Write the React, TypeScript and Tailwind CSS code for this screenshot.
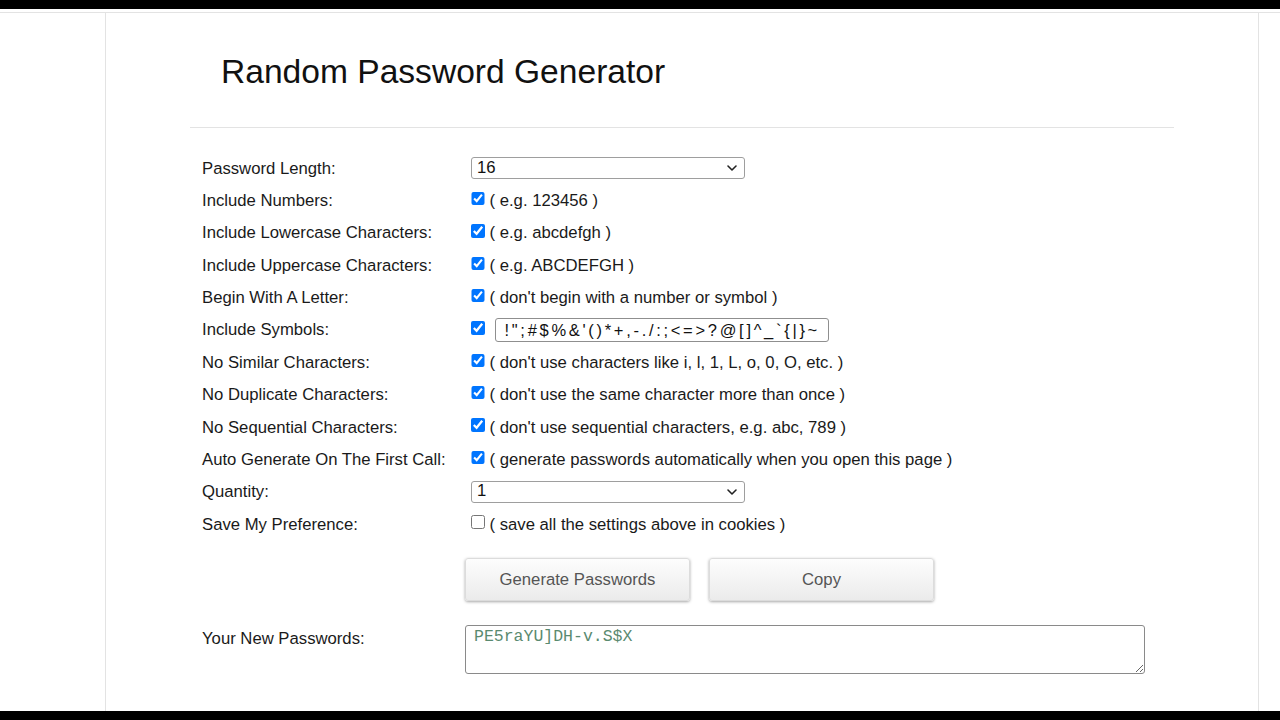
import React, { useState } from 'react';

// Random password generator settings page

const SYMBOLS = '!";#$%&\'()*+,-./:;<=>?@[]^_`{|}~';

interface OptionRow {
  label: string;
  hint: string;
  checked: boolean;
}

const OPTIONS: OptionRow[] = [
  { label: 'Include Numbers:', hint: '( e.g. 123456 )', checked: true },
  { label: 'Include Lowercase Characters:', hint: '( e.g. abcdefgh )', checked: true },
  { label: 'Include Uppercase Characters:', hint: '( e.g. ABCDEFGH )', checked: true },
  { label: 'Begin With A Letter:', hint: "( don't begin with a number or symbol )", checked: true },
];

const OPTIONS_AFTER: OptionRow[] = [
  { label: 'No Similar Characters:', hint: "( don't use characters like i, l, 1, L, o, 0, O, etc. )", checked: true },
  { label: 'No Duplicate Characters:', hint: "( don't use the same character more than once )", checked: true },
  { label: 'No Sequential Characters:', hint: "( don't use sequential characters, e.g. abc, 789 )", checked: true },
  { label: 'Auto Generate On The First Call:', hint: '( generate passwords automatically when you open this page )', checked: true },
];

const Chevron = () => (
  <svg width="12" height="8" viewBox="0 0 12 8" className="shrink-0">
    <polyline points="2,2 6,6 10,2" fill="none" stroke="#222" strokeWidth="1.6" strokeLinecap="round" strokeLinejoin="round" />
  </svg>
);

const FakeSelect: React.FC<{ value: string }> = ({ value }) => (
  <div className="ml-[6px] flex h-[22px] w-[274px] items-center justify-between rounded-[3px] border border-[#9e9e9e] bg-white pl-[5px] pr-[6px] text-[16.7px] leading-none text-[#111]">
    <span>{value}</span>
    <Chevron />
  </div>
);

const Checkbox: React.FC<{ checked: boolean }> = ({ checked }) => {
  const [on, setOn] = useState(checked);
  return (
    <input
      type="checkbox"
      checked={on}
      onChange={() => setOn(!on)}
      className="relative top-[-2px] m-0 h-[13.5px] w-[13.5px] shrink-0 accent-[#0075ff]"
    />
  );
};

const Row: React.FC<{ label: string; children: React.ReactNode }> = ({ label, children }) => (
  <div className="flex h-[32.36px] items-center">
    <div className="w-[263px] shrink-0">{label}</div>
    <div className="flex items-center">{children}</div>
  </div>
);

const CheckRow: React.FC<{ row: OptionRow }> = ({ row }) => (
  <Row label={row.label}>
    <div className="ml-[6px] flex items-center gap-[5px]">
      <Checkbox checked={row.checked} />
      <span>{row.hint}</span>
    </div>
  </Row>
);

const ActionButton: React.FC<{ children: React.ReactNode }> = ({ children }) => (
  <button className="h-[43px] w-[225px] rounded-[3px] border border-[#dcdcdc] bg-gradient-to-b from-[#fdfdfd] to-[#ebebeb] text-[16.7px] text-[#555] shadow-[0_1px_3px_rgba(0,0,0,0.35)]">
    {children}
  </button>
);

export default function App() {
  return (
    <div className="flex h-[720px] flex-col bg-white font-['Liberation_Sans',Arial,sans-serif] text-[16.7px] text-[#1a1a1a]">
      <div className="h-[9px] shrink-0 bg-black" />
      <div className="mt-[3px] flex flex-1 flex-col border-t border-[#e3e3e3]">
        <div className="ml-[105px] mr-[21px] flex-1 border-x border-[#e3e3e3] px-[84px]">
          {/* Header */}
          <h1 className="ml-[31px] mt-[39px] text-[33.6px] leading-[40px] text-[#111]">Random Password Generator</h1>
          <div className="mt-[35px] h-px bg-[#e3e3e3]" />

          {/* Settings */}
          <div className="pl-[12px] pt-[24px]">
            <Row label="Password Length:">
              <FakeSelect value="16" />
            </Row>
            {OPTIONS.map((row) => (
              <CheckRow key={row.label} row={row} />
            ))}
            <Row label="Include Symbols:">
              <div className="ml-[6px] flex items-center gap-[10px]">
                <Checkbox checked />
                <input
                  readOnly
                  value={SYMBOLS}
                  className="h-[24px] w-[334px] rounded-[3px] border border-[#8f8f8f] bg-white pl-[9px] text-[16.5px] tracking-[2.7px] text-[#111] outline-none"
                />
              </div>
            </Row>
            {OPTIONS_AFTER.map((row) => (
              <CheckRow key={row.label} row={row} />
            ))}
            <Row label="Quantity:">
              <FakeSelect value="1" />
            </Row>
            <CheckRow row={{ label: 'Save My Preference:', hint: '( save all the settings above in cookies )', checked: false }} />

            {/* Actions */}
            <div className="mt-[18px] flex gap-[19px] pl-[263px]">
              <ActionButton>Generate Passwords</ActionButton>
              <ActionButton>Copy</ActionButton>
            </div>

            {/* Output */}
            <div className="mt-[24px] flex items-start">
              <div className="w-[263px] shrink-0 pt-[1px]">Your New Passwords:</div>
              <textarea
                readOnly
                value="PE5raYU]DH-v.S$X"
                className="h-[49px] w-[680px] rounded-[3px] border border-[#8a8a8a] bg-white px-[8px] pt-[1px] font-['Liberation_Mono','Courier_New',monospace] text-[16.5px] leading-[20px] text-[#5a8a70] outline-none"
              />
            </div>
          </div>
        </div>
      </div>
      <div className="h-[9px] shrink-0 bg-black" />
    </div>
  );
}
